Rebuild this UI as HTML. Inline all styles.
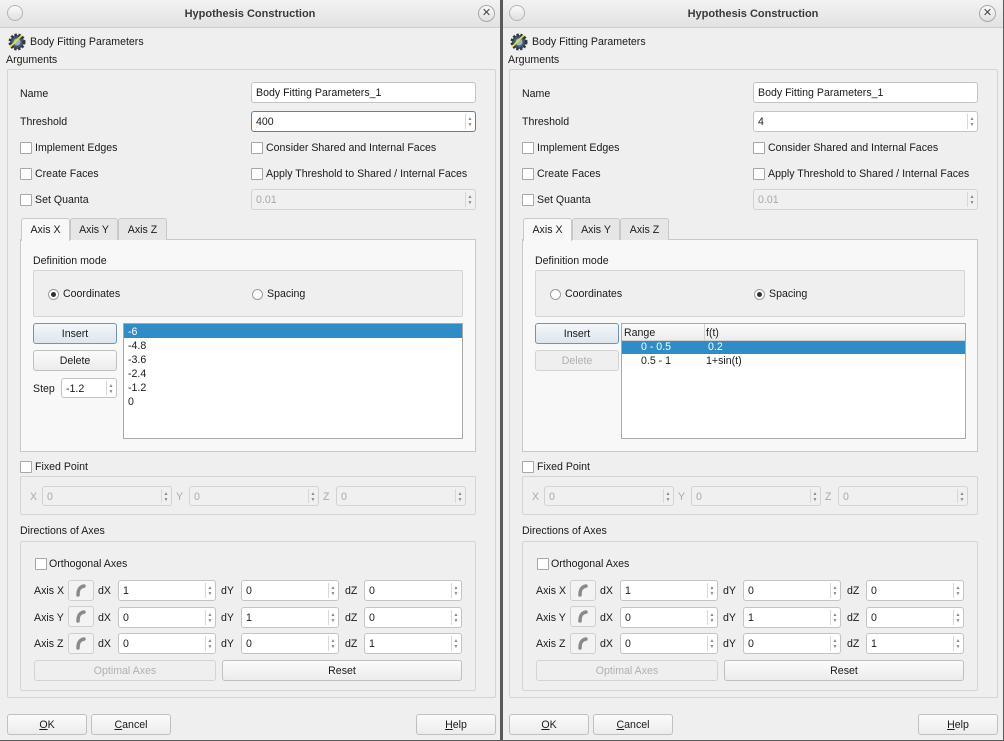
<!DOCTYPE html>
<html><head><meta charset="utf-8">
<style>
*{box-sizing:border-box;margin:0;padding:0}
body{width:1004px;height:741px;background:#5a5a5a;font-family:"Liberation Sans","DejaVu Sans",sans-serif;font-size:10.6px;color:#1a1a1a;position:relative;overflow:hidden}
.dlg{position:absolute;top:0;width:500px;height:740px;background:#efefef;overflow:hidden}
.a{position:absolute;white-space:nowrap;margin-top:1px}
.tb{position:absolute;left:0;top:0;width:100%;height:28px;background:linear-gradient(#f2f2f2,#e2e2e2);border-bottom:1px solid #cfcfcf}
.title{position:absolute;top:8px;left:0;width:100%;text-align:center;font-weight:bold;font-size:11px;color:#3a3a3a}
.circ{position:absolute;width:16px;height:16px;border-radius:50%;border:1px solid #b5b5b5;background:linear-gradient(#fafafa,#e0e0e0)}
.frame{position:absolute;border:1px solid #d4d4d4;border-radius:2px}
.inp{position:absolute;background:#fff;border:1px solid #c4c4c4;border-radius:3px;padding:4px 4px 0;height:21px;line-height:13px}
.dis{background:#f0f0f0;color:#a8a8a8;border-color:#d2d2d2}
.spin::after{content:"";position:absolute;right:9px;top:2px;bottom:2px;border-left:1px solid #d8d8d8}
.arr{position:absolute;right:2px;top:4px;width:6px;font-size:5px;line-height:6px;color:#888;text-align:center}
.cb{position:absolute;width:12px;height:12px;background:#fff;border:1px solid #a8a8a8;border-radius:1px;margin-top:1px}
.rb{position:absolute;width:11px;height:11px;background:#fff;border:1px solid #9c9c9c;border-radius:50%;margin-top:1px}
.rb.on::after{content:"";position:absolute;left:2px;top:2px;width:5px;height:5px;border-radius:50%;background:#333}
.btn{position:absolute;height:21px;border:1px solid #c0c0c0;border-radius:3px;background:linear-gradient(#fbfbfb,#ececec);text-align:center;line-height:21px}
.btn.def{border-color:#6f94bd;background:linear-gradient(#f4f7fa,#dde5ed)}
.btn.off{color:#b0b0b0;border-color:#d3d3d3;background:#efefef}
.tab{position:absolute;top:218px;height:22px;border:1px solid #c8c8c8;border-bottom:none;border-radius:3px 3px 0 0;background:#e6e6e6;text-align:center;line-height:22px}
.panel{position:absolute;left:20px;top:239px;width:456px;height:213px;background:#f8f8f8;border:1px solid #c8c8c8}
.list{position:absolute;background:#fff;border:1px solid #a9a9a9}
.sel{position:absolute;background:#308cc6;color:#fff}
.ab{position:absolute;width:26px;height:21px;border:1px solid #cfcfcf;border-radius:3px;background:#f3f3f3}
u{text-decoration:underline}
</style></head><body>

<!-- LEFT DIALOG -->
<div class="dlg" style="left:0">
<div class="tb"><div class="title">Hypothesis Construction</div>
<div class="circ" style="left:7px;top:5px"></div>
<div class="circ" style="left:478px;top:5px;width:17px;height:17px;font-size:11px;line-height:15px;text-align:center;color:#444;border-color:#a8a8a8">✕</div></div>
<svg class="a" style="left:7px;top:31px" width="20" height="20" viewBox="0 0 20 20"><circle cx="10" cy="10" r="7" fill="#4a5a6e" stroke="#2c3644" stroke-width="3" stroke-dasharray="2.2 1.6"/><circle cx="10" cy="10" r="3.5" fill="#9fb4cc"/><path d="M3 15 L15 3" stroke="#e5e52a" stroke-width="1.6"/></svg>
<div class="a" style="left:30px;top:35px">Body Fitting Parameters</div>
<div class="a" style="left:6px;top:53px">Arguments</div>
<div class="frame" style="left:7px;top:69px;width:489px;height:629px"></div>
<div class="a" style="left:20px;top:87px">Name</div>
<div class="inp" style="left:251px;top:82px;width:225px">Body Fitting Parameters_1</div>
<div class="a" style="left:20px;top:115px">Threshold</div>
<div class="inp spin" style="left:251px;top:111px;width:225px;border-color:#3d8ad0">400<div class="arr">▲<br>▼</div></div>
<div class="cb" style="left:20px;top:141px"></div><div class="a" style="left:35px;top:141px">Implement Edges</div>
<div class="cb" style="left:251px;top:141px"></div><div class="a" style="left:266px;top:141px">Consider Shared and Internal Faces</div>
<div class="cb" style="left:20px;top:167px"></div><div class="a" style="left:35px;top:167px">Create Faces</div>
<div class="cb" style="left:251px;top:167px"></div><div class="a" style="left:266px;top:167px">Apply Threshold to Shared / Internal Faces</div>
<div class="cb" style="left:20px;top:193px"></div><div class="a" style="left:35px;top:193px">Set Quanta</div>
<div class="inp spin dis" style="left:251px;top:189px;width:225px">0.01<div class="arr">▲<br>▼</div></div>
<div class="panel"></div>
<div class="tab" style="left:21px;width:49px;background:#f8f8f8;height:23px;z-index:2">Axis X</div>
<div class="tab" style="left:70px;width:48px">Axis Y</div>
<div class="tab" style="left:118px;width:49px">Axis Z</div>
<div class="a" style="left:33px;top:254px">Definition mode</div>
<div class="frame" style="left:33px;top:270px;width:430px;height:47px;background:#efefef"></div>
<div class="rb on" style="left:48px;top:288px"></div><div class="a" style="left:63px;top:287px">Coordinates</div>
<div class="rb" style="left:252px;top:288px"></div><div class="a" style="left:267px;top:287px">Spacing</div>
<div class="btn def" style="left:33px;top:323px;width:84px">Insert</div>
<div class="btn" style="left:33px;top:350px;width:84px">Delete</div>
<div class="a" style="left:33px;top:382px">Step</div>
<div class="inp spin" style="left:61px;top:378px;width:56px;height:20px">-1.2<div class="arr">▲<br>▼</div></div>
<div class="list" style="left:123px;top:323px;width:340px;height:116px">
<div class="sel" style="left:0;top:0;width:338px;height:14px"></div>
<div class="a" style="left:4px;top:1px;color:#fff">-6</div>
<div class="a" style="left:4px;top:15px">-4.8</div>
<div class="a" style="left:4px;top:29px">-3.6</div>
<div class="a" style="left:4px;top:43px">-2.4</div>
<div class="a" style="left:4px;top:57px">-1.2</div>
<div class="a" style="left:4px;top:71px">0</div>
</div>
<div class="cb" style="left:20px;top:460px"></div><div class="a" style="left:35px;top:460px">Fixed Point</div>
<div class="frame" style="left:20px;top:476px;width:456px;height:39px"></div>
<div class="a" style="left:30px;top:490px;color:#aaa">X</div><div class="inp spin dis" style="left:42px;top:486px;width:130px;height:20px">0<div class="arr">▲<br>▼</div></div>
<div class="a" style="left:176px;top:490px;color:#aaa">Y</div><div class="inp spin dis" style="left:189px;top:486px;width:130px;height:20px">0<div class="arr">▲<br>▼</div></div>
<div class="a" style="left:323px;top:490px;color:#aaa">Z</div><div class="inp spin dis" style="left:336px;top:486px;width:130px;height:20px">0<div class="arr">▲<br>▼</div></div>
<div class="a" style="left:20px;top:524px">Directions of Axes</div>
<div class="frame" style="left:20px;top:541px;width:456px;height:150px"></div>
<div class="cb" style="left:35px;top:557px"></div><div class="a" style="left:49px;top:557px">Orthogonal Axes</div>
<div class="a" style="left:34px;top:584px">Axis X</div><div class="ab" style="left:68px;top:580px"><svg width="24" height="19"><path d="M9 14 C9 8 11 6 15 5" stroke="#8a8a8a" stroke-width="3.5" fill="none" stroke-linecap="round"/></svg></div>
<div class="a" style="left:98px;top:584px">dX</div><div class="inp spin" style="left:118px;top:580px;width:98px">1<div class="arr">▲<br>▼</div></div>
<div class="a" style="left:221px;top:584px">dY</div><div class="inp spin" style="left:241px;top:580px;width:98px">0<div class="arr">▲<br>▼</div></div>
<div class="a" style="left:345px;top:584px">dZ</div><div class="inp spin" style="left:364px;top:580px;width:98px">0<div class="arr">▲<br>▼</div></div>
<div class="a" style="left:34px;top:611px">Axis Y</div><div class="ab" style="left:68px;top:606px"><svg width="24" height="19"><path d="M9 14 C9 8 11 6 15 5" stroke="#8a8a8a" stroke-width="3.5" fill="none" stroke-linecap="round"/></svg></div>
<div class="a" style="left:98px;top:611px">dX</div><div class="inp spin" style="left:118px;top:607px;width:98px">0<div class="arr">▲<br>▼</div></div>
<div class="a" style="left:221px;top:611px">dY</div><div class="inp spin" style="left:241px;top:607px;width:98px">1<div class="arr">▲<br>▼</div></div>
<div class="a" style="left:345px;top:611px">dZ</div><div class="inp spin" style="left:364px;top:607px;width:98px">0<div class="arr">▲<br>▼</div></div>
<div class="a" style="left:34px;top:637px">Axis Z</div><div class="ab" style="left:68px;top:633px"><svg width="24" height="19"><path d="M9 14 C9 8 11 6 15 5" stroke="#8a8a8a" stroke-width="3.5" fill="none" stroke-linecap="round"/></svg></div>
<div class="a" style="left:98px;top:637px">dX</div><div class="inp spin" style="left:118px;top:633px;width:98px">0<div class="arr">▲<br>▼</div></div>
<div class="a" style="left:221px;top:637px">dY</div><div class="inp spin" style="left:241px;top:633px;width:98px">0<div class="arr">▲<br>▼</div></div>
<div class="a" style="left:345px;top:637px">dZ</div><div class="inp spin" style="left:364px;top:633px;width:98px">1<div class="arr">▲<br>▼</div></div>
<div class="btn off" style="left:34px;top:660px;width:182px">Optimal Axes</div>
<div class="btn" style="left:222px;top:660px;width:240px">Reset</div>
<div class="btn" style="left:7px;top:714px;width:80px"><u>O</u>K</div>
<div class="btn" style="left:91px;top:714px;width:80px"><u>C</u>ancel</div>
<div class="btn" style="left:416px;top:714px;width:80px"><u>H</u>elp</div>
</div>

<!-- RIGHT DIALOG -->
<div class="dlg" style="left:503px;width:500px">
<div class="tb"><div class="title">Hypothesis Construction</div>
<div class="circ" style="left:6px;top:5px"></div>
<div class="circ" style="left:476px;top:5px;width:17px;height:17px;font-size:11px;line-height:15px;text-align:center;color:#444;border-color:#a8a8a8">✕</div></div>
<svg class="a" style="left:6px;top:31px" width="20" height="20" viewBox="0 0 20 20"><circle cx="10" cy="10" r="7" fill="#4a5a6e" stroke="#2c3644" stroke-width="3" stroke-dasharray="2.2 1.6"/><circle cx="10" cy="10" r="3.5" fill="#9fb4cc"/><path d="M3 15 L15 3" stroke="#e5e52a" stroke-width="1.6"/></svg>
<div class="a" style="left:29px;top:35px">Body Fitting Parameters</div>
<div class="a" style="left:5px;top:53px">Arguments</div>
<div class="frame" style="left:6px;top:69px;width:489px;height:629px"></div>
<div class="a" style="left:19px;top:87px">Name</div>
<div class="inp" style="left:250px;top:82px;width:225px">Body Fitting Parameters_1</div>
<div class="a" style="left:19px;top:115px">Threshold</div>
<div class="inp spin" style="left:250px;top:111px;width:225px">4<div class="arr">▲<br>▼</div></div>
<div class="cb" style="left:19px;top:141px"></div><div class="a" style="left:34px;top:141px">Implement Edges</div>
<div class="cb" style="left:250px;top:141px"></div><div class="a" style="left:265px;top:141px">Consider Shared and Internal Faces</div>
<div class="cb" style="left:19px;top:167px"></div><div class="a" style="left:34px;top:167px">Create Faces</div>
<div class="cb" style="left:250px;top:167px"></div><div class="a" style="left:265px;top:167px">Apply Threshold to Shared / Internal Faces</div>
<div class="cb" style="left:19px;top:193px"></div><div class="a" style="left:34px;top:193px">Set Quanta</div>
<div class="inp spin dis" style="left:250px;top:189px;width:225px">0.01<div class="arr">▲<br>▼</div></div>
<div class="panel" style="left:19px"></div>
<div class="tab" style="left:20px;width:49px;background:#f8f8f8;height:23px;z-index:2">Axis X</div>
<div class="tab" style="left:69px;width:48px">Axis Y</div>
<div class="tab" style="left:117px;width:49px">Axis Z</div>
<div class="a" style="left:32px;top:254px">Definition mode</div>
<div class="frame" style="left:32px;top:270px;width:430px;height:47px;background:#efefef"></div>
<div class="rb" style="left:47px;top:288px"></div><div class="a" style="left:62px;top:287px">Coordinates</div>
<div class="rb on" style="left:251px;top:288px"></div><div class="a" style="left:266px;top:287px">Spacing</div>
<div class="btn def" style="left:32px;top:323px;width:84px">Insert</div>
<div class="btn off" style="left:32px;top:350px;width:84px">Delete</div>
<div class="list" style="left:118px;top:323px;width:345px;height:116px">
<div class="a" style="left:0;top:0;margin-top:0;width:343px;height:17px;background:linear-gradient(#fbfbfb,#ededed);border-bottom:1px solid #d0d0d0"></div>
<div class="a" style="left:82px;top:0;margin-top:0;height:17px;border-left:1px solid #d0d0d0"></div>
<div class="a" style="left:2px;top:2px">Range</div>
<div class="a" style="left:84px;top:2px">f(t)</div>
<div class="sel" style="left:0;top:17px;width:343px;height:13px"></div>
<div class="a" style="left:19px;top:16px;color:#fff">0 - 0.5</div>
<div class="a" style="left:86px;top:16px;color:#fff">0.2</div>
<div class="a" style="left:19px;top:30px">0.5 - 1</div>
<div class="a" style="left:84px;top:30px">1+sin(t)</div>
</div>
<div class="cb" style="left:19px;top:460px"></div><div class="a" style="left:34px;top:460px">Fixed Point</div>
<div class="frame" style="left:19px;top:476px;width:456px;height:39px"></div>
<div class="a" style="left:29px;top:490px;color:#aaa">X</div><div class="inp spin dis" style="left:41px;top:486px;width:130px;height:20px">0<div class="arr">▲<br>▼</div></div>
<div class="a" style="left:175px;top:490px;color:#aaa">Y</div><div class="inp spin dis" style="left:188px;top:486px;width:130px;height:20px">0<div class="arr">▲<br>▼</div></div>
<div class="a" style="left:322px;top:490px;color:#aaa">Z</div><div class="inp spin dis" style="left:335px;top:486px;width:130px;height:20px">0<div class="arr">▲<br>▼</div></div>
<div class="a" style="left:19px;top:524px">Directions of Axes</div>
<div class="frame" style="left:19px;top:541px;width:456px;height:150px"></div>
<div class="cb" style="left:34px;top:557px"></div><div class="a" style="left:48px;top:557px">Orthogonal Axes</div>
<div class="a" style="left:33px;top:584px">Axis X</div><div class="ab" style="left:67px;top:580px"><svg width="24" height="19"><path d="M9 14 C9 8 11 6 15 5" stroke="#8a8a8a" stroke-width="3.5" fill="none" stroke-linecap="round"/></svg></div>
<div class="a" style="left:97px;top:584px">dX</div><div class="inp spin" style="left:117px;top:580px;width:98px">1<div class="arr">▲<br>▼</div></div>
<div class="a" style="left:220px;top:584px">dY</div><div class="inp spin" style="left:240px;top:580px;width:98px">0<div class="arr">▲<br>▼</div></div>
<div class="a" style="left:344px;top:584px">dZ</div><div class="inp spin" style="left:363px;top:580px;width:98px">0<div class="arr">▲<br>▼</div></div>
<div class="a" style="left:33px;top:611px">Axis Y</div><div class="ab" style="left:67px;top:606px"><svg width="24" height="19"><path d="M9 14 C9 8 11 6 15 5" stroke="#8a8a8a" stroke-width="3.5" fill="none" stroke-linecap="round"/></svg></div>
<div class="a" style="left:97px;top:611px">dX</div><div class="inp spin" style="left:117px;top:607px;width:98px">0<div class="arr">▲<br>▼</div></div>
<div class="a" style="left:220px;top:611px">dY</div><div class="inp spin" style="left:240px;top:607px;width:98px">1<div class="arr">▲<br>▼</div></div>
<div class="a" style="left:344px;top:611px">dZ</div><div class="inp spin" style="left:363px;top:607px;width:98px">0<div class="arr">▲<br>▼</div></div>
<div class="a" style="left:33px;top:637px">Axis Z</div><div class="ab" style="left:67px;top:633px"><svg width="24" height="19"><path d="M9 14 C9 8 11 6 15 5" stroke="#8a8a8a" stroke-width="3.5" fill="none" stroke-linecap="round"/></svg></div>
<div class="a" style="left:97px;top:637px">dX</div><div class="inp spin" style="left:117px;top:633px;width:98px">0<div class="arr">▲<br>▼</div></div>
<div class="a" style="left:220px;top:637px">dY</div><div class="inp spin" style="left:240px;top:633px;width:98px">0<div class="arr">▲<br>▼</div></div>
<div class="a" style="left:344px;top:637px">dZ</div><div class="inp spin" style="left:363px;top:633px;width:98px">1<div class="arr">▲<br>▼</div></div>
<div class="btn off" style="left:33px;top:660px;width:182px">Optimal Axes</div>
<div class="btn" style="left:221px;top:660px;width:240px">Reset</div>
<div class="btn" style="left:6px;top:714px;width:80px"><u>O</u>K</div>
<div class="btn" style="left:90px;top:714px;width:80px"><u>C</u>ancel</div>
<div class="btn" style="left:415px;top:714px;width:80px"><u>H</u>elp</div>
</div>
</body></html>
